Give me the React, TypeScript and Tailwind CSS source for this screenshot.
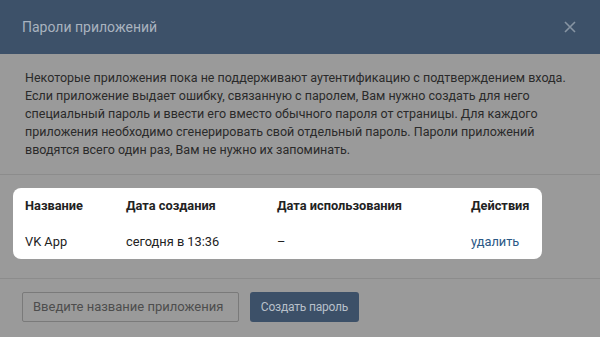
import React from "react";

export default function App() {
  return (
    <div
      className="w-[600px] h-[337px] overflow-hidden bg-[#9a9a9a] text-[#262626]"
      style={{ fontFamily: "Roboto, 'Noto Sans', sans-serif" }}
    >
      <div className="h-[54px] bg-[#3d5169] flex items-center justify-between pl-[22px] pr-[24px]">
        <div className="text-[14px] text-[#a9b3bf]">Пароли приложений</div>
        <svg width="12" height="12" viewBox="0 0 12 12" className="text-[#8794a3]">
          <path d="M1 1L11 11M11 1L1 11" stroke="currentColor" strokeWidth="1.6" />
        </svg>
      </div>
      <div className="pt-[15px] pb-[15px] pl-[25px] pr-[20px] text-[12.5px] leading-[18px] text-[#2a2a2a]">
        Некоторые приложения пока не поддерживают аутентификацию с подтверждением входа.
        Если приложение выдает ошибку, связанную с паролем, Вам нужно создать для него
        специальный пароль и ввести его вместо обычного пароля от страницы. Для каждого
        приложения необходимо сгенерировать свой отдельный пароль. Пароли приложений
        вводятся всего один раз, Вам не нужно их запоминать.
      </div>
      <div className="border-t border-[#8c8c8c] px-[13px] pt-[13px] pb-[19px]">
        <div className="w-[529px] rounded-[8px] bg-white px-[12px] text-[12.8px] text-[#222]">
          <div className="h-[36px] flex items-center font-bold">
            <div className="w-[101px]">Название</div>
            <div className="w-[151px]">Дата создания</div>
            <div className="w-[194px]">Дата использования</div>
            <div>Действия</div>
          </div>
          <div className="h-[35px] flex items-center">
            <div className="w-[101px]">VK App</div>
            <div className="w-[151px]">сегодня в 13:36</div>
            <div className="w-[194px]">–</div>
            <div className="text-[#2a5885]">удалить</div>
          </div>
        </div>
      </div>
      <div className="border-t border-[#8c8c8c] pl-[22px] pt-[13px] flex items-center gap-[11px]">
        <div className="w-[217px] h-[30px] border border-[#7a7a7a] rounded-[2px] flex items-center pl-[10px] text-[13px] text-[#4d4d4d]">
          Введите название приложения
        </div>
        <div className="w-[109px] h-[30px] rounded-[3px] bg-[#3c5068] flex items-center justify-center text-[12px] tracking-[-0.2px] text-[#b8c0ca]">
          Создать пароль
        </div>
      </div>
    </div>
  );
}
